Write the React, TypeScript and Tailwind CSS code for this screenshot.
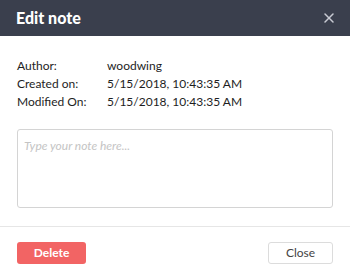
import { X } from "lucide-react";

export default function App() {
  return (
    <div className="h-[276px] w-[350px] bg-white font-['Lato',sans-serif] text-[#1e1e1e]">
      {/* Header */}
      <div className="flex h-9 items-center justify-between bg-[#3a3f4d] pl-4 pr-[13px]">
        <h1 className="text-[16px] font-black text-white">Edit note</h1>
        <X className="h-4 w-4 text-[#c8cbd3]" strokeWidth={2.25} />
      </div>

      {/* Details */}
      <div className="px-[17px] pt-[21px]">
        <dl className="text-[12px] leading-[18px]">
          <Row label="Author:" value="woodwing" />
          <Row label="Created on:" value="5/15/2018, 10:43:35 AM" />
          <Row label="Modified On:" value="5/15/2018, 10:43:35 AM" />
        </dl>

        <textarea
          placeholder="Type your note here..."
          className="mt-[18px] block h-[79px] w-full resize-none rounded-[3px] border border-[#d4d4d4] px-[6px] py-[7px] text-[12px] outline-none placeholder:italic placeholder:text-[#c4c4c4]"
        />
      </div>

      {/* Footer */}
      <div className="mt-[18px] flex items-center justify-between border-t border-[#e6e6e6] px-[17px] pt-[15px]">
        <button className="h-[22px] w-[69px] rounded-[3px] bg-[#f26464] text-[12px] font-bold text-white">
          Delete
        </button>
        <button className="h-[22px] w-[65px] rounded-[3px] border border-[#dcdcdc] bg-white text-[12px] text-[#444]">
          Close
        </button>
      </div>
    </div>
  );
}

function Row({ label, value }: { label: string; value: string }) {
  return (
    <div className="flex">
      <dt className="w-[90px]">{label}</dt>
      <dd>{value}</dd>
    </div>
  );
}
